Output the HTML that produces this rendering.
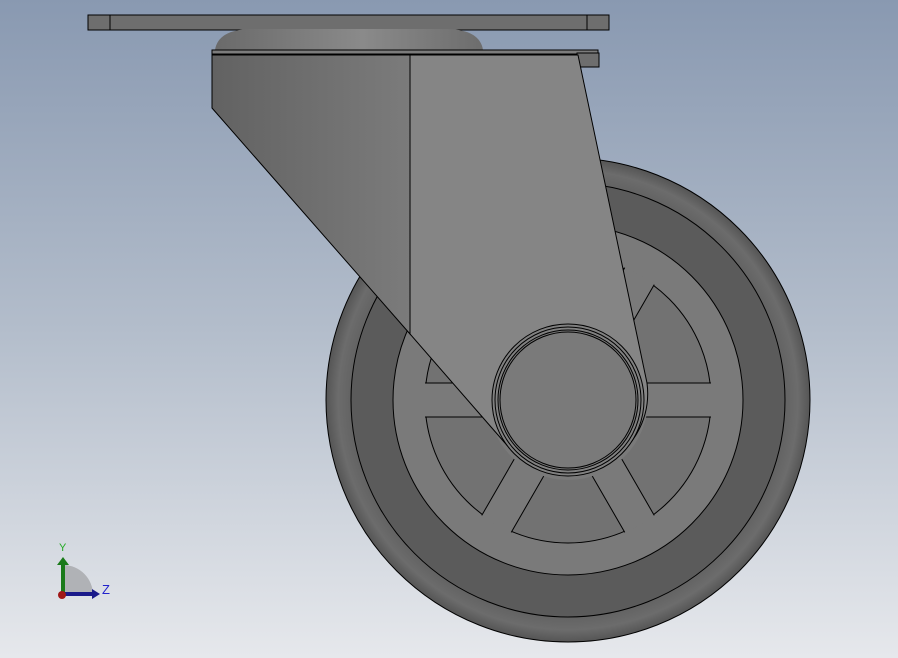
<!DOCTYPE html>
<html><head><style>html,body{margin:0;padding:0;width:898px;height:658px;overflow:hidden}
body{background:linear-gradient(#8999b1 0%,#b3bdcb 50%,#e6e8ec 100%)}</style></head><body>
<svg width="898" height="658" viewBox="0 0 898 658" xmlns="http://www.w3.org/2000/svg" style="position:absolute;left:0;top:0">
<defs>
<radialGradient id="tire" cx="568" cy="400" r="242" gradientUnits="userSpaceOnUse">
<stop offset="0.88" stop-color="#606060"/><stop offset="0.95" stop-color="#6c6c6c"/><stop offset="1" stop-color="#555"/></radialGradient>
<linearGradient id="lf" x1="0" x2="1"><stop offset="0" stop-color="#626262"/><stop offset="1" stop-color="#7b7b7b"/></linearGradient>
<linearGradient id="dome" x1="0" x2="1"><stop offset="0" stop-color="#6a6a6a"/><stop offset="0.55" stop-color="#8a8a8a"/><stop offset="1" stop-color="#6d6d6d"/></linearGradient>
</defs>
<g stroke="#000" stroke-width="1">
<circle cx="568" cy="400" r="242" fill="url(#tire)"/>
<circle cx="568" cy="400" r="217" fill="#5b5b5b"/>
<circle cx="568" cy="400" r="175" fill="#7a7a7a"/>
<circle cx="568" cy="400" r="143" fill="#727272"/>
</g>
<g fill="#7a7a7a">
<g id="sp"><rect x="568" y="383" width="144" height="34"/><line x1="568" y1="383" x2="711" y2="383" stroke="#000"/><line x1="568" y1="417" x2="711" y2="417" stroke="#000"/></g>
<use href="#sp" transform="rotate(60 568 400)"/>
<use href="#sp" transform="rotate(120 568 400)"/>
<use href="#sp" transform="rotate(180 568 400)"/>
<use href="#sp" transform="rotate(240 568 400)"/>
<use href="#sp" transform="rotate(300 568 400)"/>
</g>
<circle cx="568" cy="400" r="80" fill="#7a7a7a"/>
<!-- fork -->
<g stroke="#000" stroke-width="1">
<rect x="88" y="15" width="521" height="15" fill="#6e6e6e"/>
<line x1="110" y1="15" x2="110" y2="30"/><line x1="587" y1="15" x2="587" y2="30"/>
<path d="M215 50 Q218 30 250 29 L448 29 Q480 30 483 50 Z" fill="url(#dome)" stroke="none"/>
<rect x="212" y="50" width="386" height="4" fill="#7c7c7c"/>
<rect x="577" y="53" width="22" height="14" fill="#6e6e6e"/>
<polygon points="212,55 410,55 410,334 212,108" fill="url(#lf)"/>
<path d="M410 55 L578 55 L647 383 A80 80 0 0 1 505 443 L410 334 Z" fill="#858585"/>
</g>
<g stroke="#000" fill="none">
<circle cx="568" cy="400" r="76" fill="#808080"/>
<circle cx="568" cy="400" r="73"/>
<circle cx="568" cy="400" r="70" fill="#7a7a7a"/>
<circle cx="568" cy="400" r="68"/>
</g>
<!-- triad -->
<path d="M63 595 L63 565 A30 30 0 0 1 93 595 Z" fill="#b0b2b6"/>
<rect x="61" y="563" width="4" height="31" fill="#1a7a1a"/>
<polygon points="57,565 63,557 69,565" fill="#1a7a1a"/>
<rect x="63" y="592" width="30" height="4" fill="#1a1a8a"/>
<polygon points="92,589 100,594 92,599" fill="#1a1a8a"/>
<circle cx="62" cy="595" r="4" fill="#a01818"/>
<text x="59" y="551" font-family="Liberation Sans,sans-serif" font-size="11" fill="#2a2">Y</text>
<text x="102" y="594" font-family="Liberation Sans,sans-serif" font-size="13" fill="#22c">Z</text>
</svg>
</body></html>
